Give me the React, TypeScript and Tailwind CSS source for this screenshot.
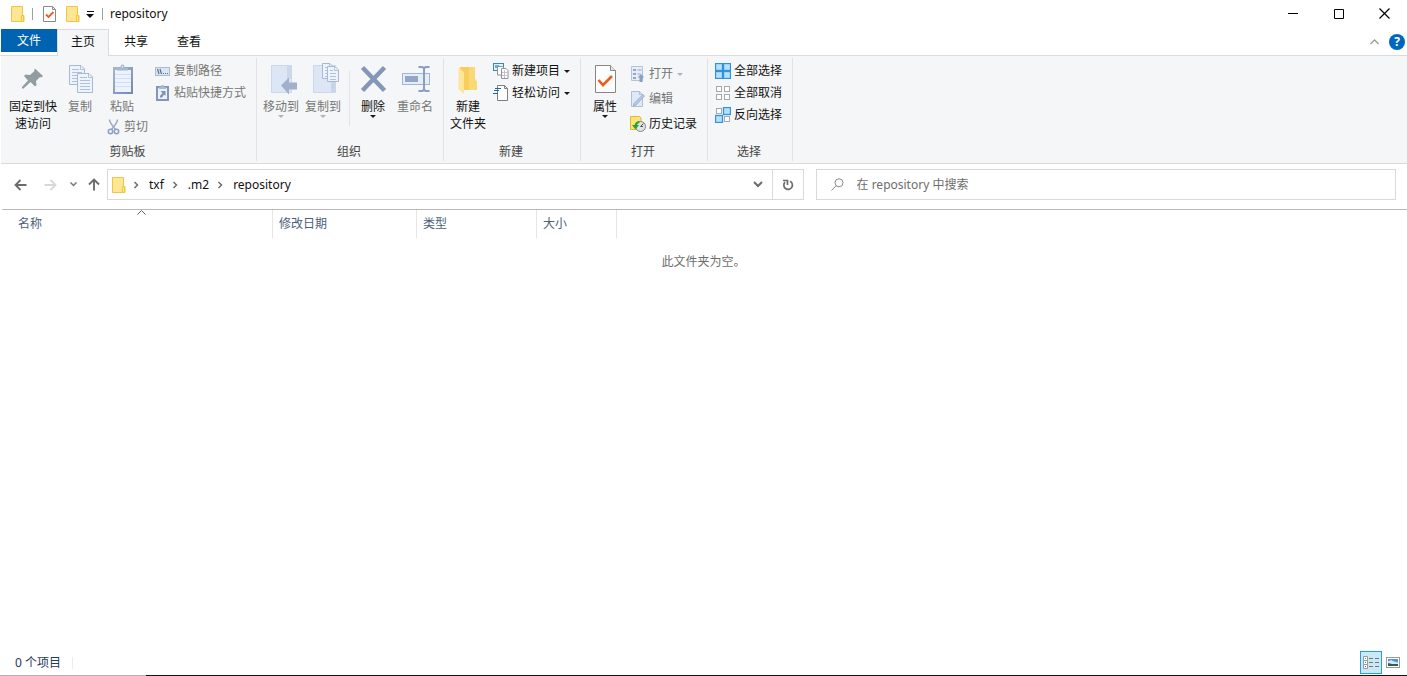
import { ReactNode, useState } from "react";

const COLUMNS = [
  { label: "修改日期", width: "w-[144px]" },
  { label: "类型", width: "w-[120px]" },
  { label: "大小", width: "w-[80px]" },
];

const CRUMBS = ["txf", ".m2", "repository"];

type IconProps = { w: number; h: number; children: ReactNode };

function Icon({ w, h, children }: IconProps) {
  return (
    <svg width={w} height={h} viewBox={`0 0 ${w} ${h}`} fill="none" aria-hidden="true" className="shrink-0">
      {children}
    </svg>
  );
}

// Small icons

function FolderIcon() {
  return (
    <Icon w={14} h={16}>
      <path d="M.5.5h11v9h1.500v6H.5z" fill="#ffe694" stroke="#eec646" />
      <path d="M10.500 15v-5.500h2v6" stroke="#eec646" />
    </Icon>
  );
}

function CheckDocIcon() {
  return (
    <Icon w={13} h={16}>
      <path d="M.5.5h9l3 3v12H.5z" fill="#fff" stroke="#8a8a8a" />
      <path d="M9.500.5v3h3" stroke="#8a8a8a" />
      <path d="M3 8.500l2.500 2.500 5-5" stroke="#ec5f1e" strokeWidth="1.800" />
    </Icon>
  );
}

function DownArrow({ muted }: { muted?: boolean }) {
  return (
    <Icon w={6} h={3}>
      <path d="M0 0h6L3 3z" fill={muted ? "#b0b3b7" : "#1a1a1a"} />
    </Icon>
  );
}

function ChevronRight() {
  return (
    <Icon w={6} h={8}>
      <path d="M1.500 1l3 3-3 3" stroke="#6e6e6e" strokeWidth="1.500" />
    </Icon>
  );
}

function CopyPathIcon() {
  return (
    <Icon w={16} h={16}>
      <rect x=".5" y="4.500" width="14" height="8" fill="#dbe6f4" stroke="#aabbd4" />
      <path d="M2.500 6l1.500 5M5 6l1.500 5" stroke="#5a6f92" strokeWidth="1.200" />
      <path d="M8 10.500h1M10 10.500h1M12 10.500h1" stroke="#5a6f92" />
    </Icon>
  );
}

function PasteShortcutIcon() {
  return (
    <Icon w={16} h={16}>
      <rect x="2" y="2" width="11" height="13" fill="#edf2fa" stroke="#8295ba" strokeWidth="2" />
      <path d="M4 4h7V2H9L8.500 0h-2L6 2H4z" fill="#a8b8d4" />
      <path d="M5.500 6h5v5L9 9.500 7 12.500H5V11l2.500-3z" fill="#7c91b6" />
    </Icon>
  );
}

function CutIcon() {
  return (
    <Icon w={14} h={16}>
      <path d="M2.500.5c0 3 3 6.500 6 10M10.500.5c0 3-3 6.500-6 10" stroke="#9babc6" strokeWidth="1.500" />
      <circle cx="3.500" cy="12.500" r="2.200" stroke="#8c9fc0" strokeWidth="1.500" />
      <circle cx="9.500" cy="12.500" r="2.200" stroke="#8c9fc0" strokeWidth="1.500" />
    </Icon>
  );
}

function NewItemIcon() {
  return (
    <Icon w={16} h={16}>
      <rect x=".5" y=".5" width="10" height="7" fill="#dff2fb" stroke="#3c87ab" />
      <path d="M2 2h4v3H2z" fill="#5fb3d6" />
      <path d="M4.500 3.500h5l1.500 1.500v7H4.500z" fill="#fff" stroke="#8a959e" />
      <path d="M8.500 5.500h4.500l2 2v8H8.500z" fill="#fff" stroke="#8a959e" />
      <path d="M9 9.500h5.500M9 12.500h5.500" stroke="#eeb5b0" />
      <path d="M11.500 7v8" stroke="#a9c8ea" />
    </Icon>
  );
}

function EasyAccessIcon() {
  return (
    <Icon w={16} h={16}>
      <path d="M4.500.5h7l3 3v12h-10z" fill="#fff" stroke="#7f7f7f" />
      <path d="M11.500.5v3h3" stroke="#7f7f7f" />
      <path d="M2 3.500h6M1 5.500h5M0 8.500h5" stroke="#1f69a8" strokeWidth="1.200" />
    </Icon>
  );
}

function OpenIcon() {
  return (
    <Icon w={16} h={16}>
      <path d="M1.500.5h11v14h-11z" fill="#e6edf7" stroke="#b4c3da" />
      <path d="M3 3h3v2H3zM3 7h3v2H3zM3 11h3v2H3z" fill="#93a8c8" />
      <path d="M7.500 4h4M7.500 8h3" stroke="#93a8c8" />
      <path d="M11 8l3.500 3.500H12.500V16h-3v-4.500H7.500z" fill="#8da0c2" />
    </Icon>
  );
}

function EditIcon() {
  return (
    <Icon w={16} h={16}>
      <path d="M1.500.5h8l3 3v12h-11z" fill="#dfe8f5" stroke="#b0c0d8" />
      <path d="M9.500.5v3h3" stroke="#b0c0d8" />
      <path d="M13 3.500l1.500 1.500-8.500 9-2.500 1 .5-2.500z" fill="#b9c9e2" stroke="#9db0cf" />
    </Icon>
  );
}

function HistoryIcon() {
  return (
    <Icon w={16} h={16}>
      <path d="M.5.5h9l1.500 1.500v11.500H.5z" fill="#ffe27a" stroke="#e3b92e" />
      <circle cx="10.500" cy="10.500" r="5" fill="#dfe3e6" stroke="#7d858b" />
      <path d="M10.500 10.500l3-3M10.500 10.500h2.500" stroke="#555" />
      <path d="M9 5c-2.500.5-4 2-4.500 4H2l3.500 4.500L9 9H7c.3-1 1-2 2.500-2z" fill="#26a334" />
    </Icon>
  );
}

const CELLS = [[0.5, 0.5], [8.5, 0.5], [0.5, 8.5], [8.5, 8.5]];

// mode decides which of the four tiles are drawn as selected
function SelectIcon({ mode }: { mode: "all" | "none" | "invert" }) {
  return (
    <Icon w={16} h={16}>
      {CELLS.map(([x, y], i) => {
        const on = mode === "all" || (mode === "invert" && (i === 1 || i === 2));
        return on ? (
          <rect key={i} x={x} y={y} width="7" height="7" fill="#b8e0fb" stroke="#2f92de" strokeWidth="1.300" />
        ) : (
          <rect key={i} x={x + 1} y={y + 1} width="5" height="5" fill="#fff" stroke="#a8a8a8" />
        );
      })}
    </Icon>
  );
}

// Large icons

function PinIcon() {
  return (
    <Icon w={32} h={32}>
      <path
        d="M18.500 6L26 13l-1.500 1.500-1.500-.5-4 4 .5 4-1.500 1.500-4.500-4.500-7 6.500H5v-1.500l6-6.500-4-4.500 1.500-1.500 4.500.5 4.500-4-.500-1.500z"
        fill="#929da2"
      />
    </Icon>
  );
}

function CopyPage({ x, y, w, h }: { x: number; y: number; w: number; h: number }) {
  const lines = [];
  for (let ly = 7.5; ly < h - 2; ly += 3) {
    lines.push(`M3 ${ly}H${w - 3}`);
  }
  return (
    <g transform={`translate(${x} ${y})`}>
      <path d={`M.5 .5H${w - 4}L${w - 0.5} 4V${h - 0.5}H.5Z`} fill="#edf3fc" stroke="#a9b9d3" />
      <path d={`M${w - 4.5} 1V4.5H${w - 1}`} stroke="#b4c3da" />
      <path d={`M3 4.5H${w - 6}${lines.join("")}`} stroke="#b0c1dd" />
    </g>
  );
}

function CopyIcon() {
  return (
    <Icon w={32} h={32}>
      <CopyPage x={5} y={2} w={16} h={20} />
      <CopyPage x={13} y={10} w={16} h={20} />
    </Icon>
  );
}

function PasteIcon() {
  return (
    <Icon w={32} h={32}>
      <defs>
        <linearGradient id="board" x1="0" y1="0" x2="1" y2="1">
          <stop offset="0" stopColor="#a6b7d3" />
          <stop offset="1" stopColor="#7387b0" />
        </linearGradient>
      </defs>
      <rect x="7" y="4" width="20" height="27" fill="url(#board)" />
      <rect x="9" y="7" width="16" height="22" fill="#edf3fc" />
      <path d="M9 11.500h16M9 15.500h16M9 19.500h16M9 23.500h16" stroke="#d3dff0" />
      <path d="M11 7.500V5h3.500V3.500a2 2 0 0 1 4 0V5H22v2.500z" fill="#a9b8d0" />
      <circle cx="16.500" cy="3.800" r=".8" fill="#f5f6f7" />
    </Icon>
  );
}

function MoveToIcon() {
  return (
    <Icon w={32} h={32}>
      <path d="M6.500 2.500h20v27h-20z" fill="#dce6f5" stroke="#ccd8ea" />
      <path d="M22 3h4v13h-4z" fill="#cbd8ec" />
      <path d="M16 22.500l8-8v5h8v7h-8v5z" fill="#a2b0cb" />
    </Icon>
  );
}

function CopyToIcon() {
  return (
    <Icon w={32} h={32}>
      <path d="M6.500 2.500h22v27h-22z" fill="#dce6f5" stroke="#ccd8ea" />
      <path d="M24 18h4v11h-4z" fill="#c8d4e9" />
      <CopyPage x={15} y={0} w={12} h={16} />
      <CopyPage x={20} y={3} w={12} h={16} />
    </Icon>
  );
}

function DeleteIcon() {
  return (
    <Icon w={32} h={32}>
      <path d="M5.500 4.500l22 23M27.500 4.500l-22 23" stroke="#8497b8" strokeWidth="4.500" />
    </Icon>
  );
}

function RenameIcon() {
  return (
    <Icon w={32} h={32}>
      <rect x="3.500" y="10.500" width="27" height="11" fill="#e4edfa" stroke="#a3b5d2" />
      <rect x="6" y="13" width="13" height="6" fill="#93a6c8" />
      <path d="M19.500 4h4l1.500 1.500 1.500-1.500h4M19.500 28h4l1.500-1.500 1.500 1.500h4M25 5v22" stroke="#8b9ebf" strokeWidth="2" />
    </Icon>
  );
}

function NewFolderIcon() {
  return (
    <Icon w={32} h={32}>
      <path d="M8 4h15v12l2 3v8H10z" fill="#f7cd60" />
      <path d="M17 4h6v12l2 3v8h-8z" fill="#fad873" />
      <path d="M6.500 4.500l5.500 5V31l-5.500-4.500z" fill="#ffe59a" />
    </Icon>
  );
}

function PropertiesIcon() {
  return (
    <Icon w={32} h={32}>
      <path d="M6.500 2.500h15l5 5v22h-20z" fill="#fdfdfd" stroke="#868686" />
      <path d="M21.500 2.500v5h5" fill="#e8e8e8" stroke="#868686" />
      <path d="M9.500 17l4.500 5 9-9" stroke="#f05a1a" strokeWidth="2.600" />
    </Icon>
  );
}

// Ribbon parts

type CommandProps = {
  icon: ReactNode;
  children: ReactNode;
  disabled?: boolean;
  menu?: boolean;
  wide?: boolean;
};

function LargeButton({ icon, children, disabled, menu, wide }: CommandProps) {
  return (
    <button
      type="button"
      disabled={disabled}
      className={`flex flex-col items-center pt-[7px] leading-[17px] hover:bg-[#e8eff7] disabled:text-[#767676] ${
        wide ? "w-[52px]" : "w-[42px]"
      }`}
    >
      {icon}
      <span className="mt-[3px] whitespace-nowrap">{children}</span>
      {menu && <DownArrow muted={disabled} />}
    </button>
  );
}

function SmallButton({ icon, children, disabled, menu }: CommandProps) {
  return (
    <button
      type="button"
      disabled={disabled}
      className="flex items-center gap-[3px] whitespace-nowrap leading-4 hover:bg-[#e8eff7] disabled:text-[#767676]"
    >
      {icon}
      {children}
      {menu && (
        <span className="ml-px">
          <DownArrow muted={disabled} />
        </span>
      )}
    </button>
  );
}

function Group({ label, width, children }: { label: string; width: string; children: ReactNode }) {
  return (
    <section aria-label={label} className={`flex shrink-0 ${width}`}>
      <div className="flex flex-1 flex-col pb-[3px]">
        <div className="flex flex-1 items-start">{children}</div>
        <div className="pr-[2px] text-center leading-4 text-[#444]">{label}</div>
      </div>
      <div className="my-0.5 w-px bg-[#e2e3e4]" />
    </section>
  );
}

function TitleBar() {
  return (
    <header className="flex h-[29px] items-start">
      <div className="flex h-[27px] flex-1 items-center pl-[11px]">
        <FolderIcon />
        <span className="mr-[10px] ml-[7px] h-3 w-px bg-[#a0a0a0]" />
        <button type="button" aria-label="属性">
          <CheckDocIcon />
        </button>
        <button type="button" aria-label="新建文件夹" className="ml-[10px]">
          <FolderIcon />
        </button>
        <button type="button" aria-label="自定义快速访问工具栏" className="ml-[6px]">
          <Icon w={8} h={8}>
            <path d="M1 1.500h7" stroke="#111" />
            <path d="M0 4h8L4 8z" fill="#111" />
          </Icon>
        </button>
        <span className="mr-[7px] ml-2 h-3 w-px bg-[#a0a0a0]" />
        <h1>repository</h1>
      </div>
      <button type="button" aria-label="最小化" className="flex h-[27px] w-[46px] items-center justify-center hover:bg-[#e5e5e5]">
        <Icon w={10} h={11}>
          <path d="M0 5.500h10" stroke="#000" />
        </Icon>
      </button>
      <button type="button" aria-label="最大化" className="flex h-[27px] w-[46px] items-center justify-center hover:bg-[#e5e5e5]">
        <Icon w={10} h={10}>
          <path d="M.5.5h9v9h-9z" stroke="#000" />
        </Icon>
      </button>
      <button type="button" aria-label="关闭" className="flex h-[27px] w-[45px] items-center justify-center hover:bg-[#e81123]">
        <Icon w={11} h={11}>
          <path d="M.5.5l10 10M10.500.5l-10 10" stroke="#000" strokeWidth="1.200" />
        </Icon>
      </button>
    </header>
  );
}

function RibbonTabs() {
  const [active, setActive] = useState("主页");

  return (
    <nav className="flex h-[27px] items-start border-b border-[#dadbdc] pl-px">
      <button type="button" className="h-[23px] w-14 bg-[#0063b1] text-white">
        文件
      </button>
      {["主页", "共享", "查看"].map((tab) => (
        <button
          key={tab}
          type="button"
          onClick={() => setActive(tab)}
          className={`mr-px h-[27px] w-[52px] border-x border-t pb-[3px] ${
            active === tab ? "border-[#dadbdc] bg-[#f5f6f7]" : "border-transparent"
          }`}
        >
          {tab}
        </button>
      ))}
      <div className="flex flex-1 items-center justify-end gap-[10px] pt-[5px] pr-[2px]">
        <button type="button" aria-label="最小化功能区">
          <Icon w={9} h={6}>
            <path d="M.5 5l4-4 4 4" stroke="#9a9a9a" strokeWidth="1.300" />
          </Icon>
        </button>
        <button
          type="button"
          aria-label="帮助"
          className="flex h-4 w-4 items-center justify-center rounded-full bg-[#0067c0] font-bold text-white"
        >
          ?
        </button>
      </div>
    </nav>
  );
}

function Ribbon() {
  return (
    <div className="ml-px flex h-[108px] border-b border-[#dadbdc] bg-[#f5f6f7]">
      <Group label="剪贴板" width="w-64">
        <div className="flex pl-[6px]">
          <LargeButton icon={<PinIcon />} wide>
            固定到快
            <br />
            速访问
          </LargeButton>
          <LargeButton icon={<CopyIcon />} disabled>
            复制
          </LargeButton>
          <div className="flex w-[54px] flex-col gap-1">
            <LargeButton icon={<PasteIcon />} disabled>
              粘贴
            </LargeButton>
            <div className="pl-[6px]">
              <SmallButton icon={<CutIcon />} disabled>
                剪切
              </SmallButton>
            </div>
          </div>
        </div>
        <div className="flex flex-col gap-[6px] pt-[7px]">
          <SmallButton icon={<CopyPathIcon />} disabled>
            复制路径
          </SmallButton>
          <SmallButton icon={<PasteShortcutIcon />} disabled>
            粘贴快捷方式
          </SmallButton>
        </div>
      </Group>

      <Group label="组织" width="w-[187px]">
        <div className="flex pl-[3px]">
          <LargeButton icon={<MoveToIcon />} disabled menu>
            移动到
          </LargeButton>
          <LargeButton icon={<CopyToIcon />} disabled menu>
            复制到
          </LargeButton>
          <div className="mt-[15px] mr-[2px] ml-[5px] h-[55px] w-px bg-[#e2e3e4]" />
          <LargeButton icon={<DeleteIcon />} menu>
            删除
          </LargeButton>
          <LargeButton icon={<RenameIcon />} disabled>
            重命名
          </LargeButton>
        </div>
      </Group>

      <Group label="新建" width="w-[137px]">
        <div className="flex gap-1 pl-[3px]">
          <LargeButton icon={<NewFolderIcon />}>
            新建
            <br />
            文件夹
          </LargeButton>
          <div className="flex flex-col gap-[6px] pt-[7px]">
            <SmallButton icon={<NewItemIcon />} menu>
              新建项目
            </SmallButton>
            <SmallButton icon={<EasyAccessIcon />} menu>
              轻松访问
            </SmallButton>
          </div>
        </div>
      </Group>

      <Group label="打开" width="w-[127px]">
        <div className="flex gap-1 pl-[3px]">
          <LargeButton icon={<PropertiesIcon />} menu>
            属性
          </LargeButton>
          <div className="flex flex-col gap-[9px] pt-[10px]">
            <SmallButton icon={<OpenIcon />} disabled menu>
              打开
            </SmallButton>
            <SmallButton icon={<EditIcon />} disabled>
              编辑
            </SmallButton>
            <SmallButton icon={<HistoryIcon />}>历史记录</SmallButton>
          </div>
        </div>
      </Group>

      <Group label="选择" width="w-[85px]">
        <div className="flex flex-col gap-[6px] pt-[7px] pl-[7px]">
          <SmallButton icon={<SelectIcon mode="all" />}>全部选择</SmallButton>
          <SmallButton icon={<SelectIcon mode="none" />}>全部取消</SmallButton>
          <SmallButton icon={<SelectIcon mode="invert" />}>反向选择</SmallButton>
        </div>
      </Group>
    </div>
  );
}

function AddressBar() {
  return (
    <div className="flex items-center pt-[5px] pr-[11px] pb-[9px] pl-[5px]">
      <button type="button" aria-label="后退" className="flex w-[30px] justify-center">
        <Icon w={13} h={12}>
          <path d="M12.500 6h-11M6.500 1l-5 5 5 5" stroke="#6b6b6b" strokeWidth="1.800" />
        </Icon>
      </button>
      <button type="button" aria-label="前进" disabled className="flex w-[30px] justify-center">
        <Icon w={13} h={12}>
          <path d="M.5 6h11M6.500 1l5 5-5 5" stroke="#d8d8d8" strokeWidth="1.800" />
        </Icon>
      </button>
      <button type="button" aria-label="最近浏览的位置" className="flex w-4 justify-center">
        <Icon w={7} h={5}>
          <path d="M.5.500l3 3 3-3" stroke="#777" strokeWidth="1.500" />
        </Icon>
      </button>
      <button type="button" aria-label="上移" className="flex w-[26px] justify-center">
        <Icon w={12} h={13}>
          <path d="M6 12.500v-11M1 6.500l5-5 5 5" stroke="#6b6b6b" strokeWidth="1.900" />
        </Icon>
      </button>

      <div className="grid flex-1 grid-cols-[6fr_5fr] gap-3">
        <div className="flex h-[31px] items-center border border-[#d9d9d9] pl-1">
          <FolderIcon />
          <ol className="flex flex-1 items-center gap-2 pl-[7px]">
            {CRUMBS.map((crumb) => (
              <li key={crumb} className="flex items-center gap-[10px]">
                <ChevronRight />
                <a href="#">{crumb}</a>
              </li>
            ))}
          </ol>
          <button type="button" aria-label="以前的位置" className="flex w-7 justify-center">
            <Icon w={10} h={7}>
              <path d="M1 1l4 4 4-4" stroke="#6b6b6b" strokeWidth="2" />
            </Icon>
          </button>
          <button type="button" aria-label="刷新" className="flex h-full w-[31px] items-center justify-center border-l border-[#d9d9d9]">
            <Icon w={12} h={12}>
              <path d="M8 2.200a4.300 4.300 0 1 1-5 .9" stroke="#6b6b6b" strokeWidth="1.700" />
              <path d="M1 1.500h4.500V6" stroke="#6b6b6b" strokeWidth="1.700" />
            </Icon>
          </button>
        </div>

        <label className="flex h-[31px] items-center border border-[#d9d9d9] pl-[14px]">
          <Icon w={13} h={13}>
            <circle cx="8" cy="4.800" r="4" stroke="#8a8a8a" />
            <path d="M5 7.800L.5 12.500" stroke="#8a8a8a" />
          </Icon>
          <input
            type="text"
            aria-label="搜索"
            placeholder="在 repository 中搜索"
            className="ml-[13px] flex-1 outline-none placeholder:text-[#6d6d6d]"
          />
        </label>
      </div>
    </div>
  );
}

function FileList() {
  return (
    <main className="ml-0.5 flex-1 border-t border-[#b9b9b9]">
      <table className="w-full table-fixed border-separate border-spacing-0">
        <thead className="text-left text-[#4c607a]">
          <tr className="h-7">
            <th aria-sort="ascending" className="relative w-[271px] border-r border-[#e5e5e5] pl-4 font-normal">
              <span className="absolute top-0 left-1/2">
                <Icon w={9} h={5}>
                  <path d="M.5 4.500l4-4 4 4" stroke="#606060" />
                </Icon>
              </span>
              名称
            </th>
            {COLUMNS.map((col) => (
              <th key={col.label} className={`border-r border-[#e5e5e5] pl-[6px] font-normal ${col.width}`}>
                {col.label}
              </th>
            ))}
            <th />
          </tr>
        </thead>
        <tbody>
          <tr>
            <td colSpan={5} className="pt-4 pr-[2px] text-center text-[#6d6d6d]">
              此文件夹为空。
            </td>
          </tr>
        </tbody>
      </table>
    </main>
  );
}

function StatusBar() {
  return (
    <footer>
      <div className="flex h-[25px] items-center pr-[7px] pl-[15px] text-[#1e395b]">
        <span>0 个项目</span>
        <span className="ml-[11px] h-3 w-px bg-[#ececec]" />
        <button
          type="button"
          aria-label="详细信息"
          aria-pressed="true"
          className="ml-auto flex h-[23px] w-[22px] items-center justify-center border border-[#26a0da] bg-[#cbe8f6]"
        >
          <Icon w={16} h={13}>
            <path d="M.5.5h4v4h-4zM.5 4.500h4v4h-4zM.5 8.500h4v4h-4z" fill="#fff" stroke="#999" />
            <path d="M2 2h1v1H2z" fill="#3c9a4a" />
            <path d="M2 6h1v1H2z" fill="#2b78c8" />
            <path d="M2 10h1v1H2z" fill="#d02a2a" />
            <path d="M6 2.500h4M12 2.500h4M6 6.500h4M12 6.500h4M6 10.500h4M12 10.500h4" stroke="#777" />
          </Icon>
        </button>
        <button type="button" aria-label="大缩略图" className="ml-1">
          <Icon w={14} h={11}>
            <rect x=".5" y=".5" width="13" height="10" fill="#fff" stroke="#999" />
            <path d="M2 2h10v7H2z" fill="#4d94dc" />
            <path d="M2 4.500l3-1.500 3 1.500 4 1v2H2z" fill="#d4e8f8" />
            <path d="M2 6l4 1h6v2H2z" fill="#2f5f46" />
          </Icon>
        </button>
      </div>
      <div className="flex h-px bg-[#06152b]">
        <div className="w-[146px] bg-[#b4b4b4]" />
      </div>
    </footer>
  );
}

export default function App() {
  return (
    <div className="flex min-h-screen flex-col bg-white font-['Noto_Sans','Noto_Sans_CJK_SC',sans-serif] text-[12px] leading-4 text-[#111]">
      <TitleBar />
      <RibbonTabs />
      <Ribbon />
      <AddressBar />
      <FileList />
      <StatusBar />
    </div>
  );
}
